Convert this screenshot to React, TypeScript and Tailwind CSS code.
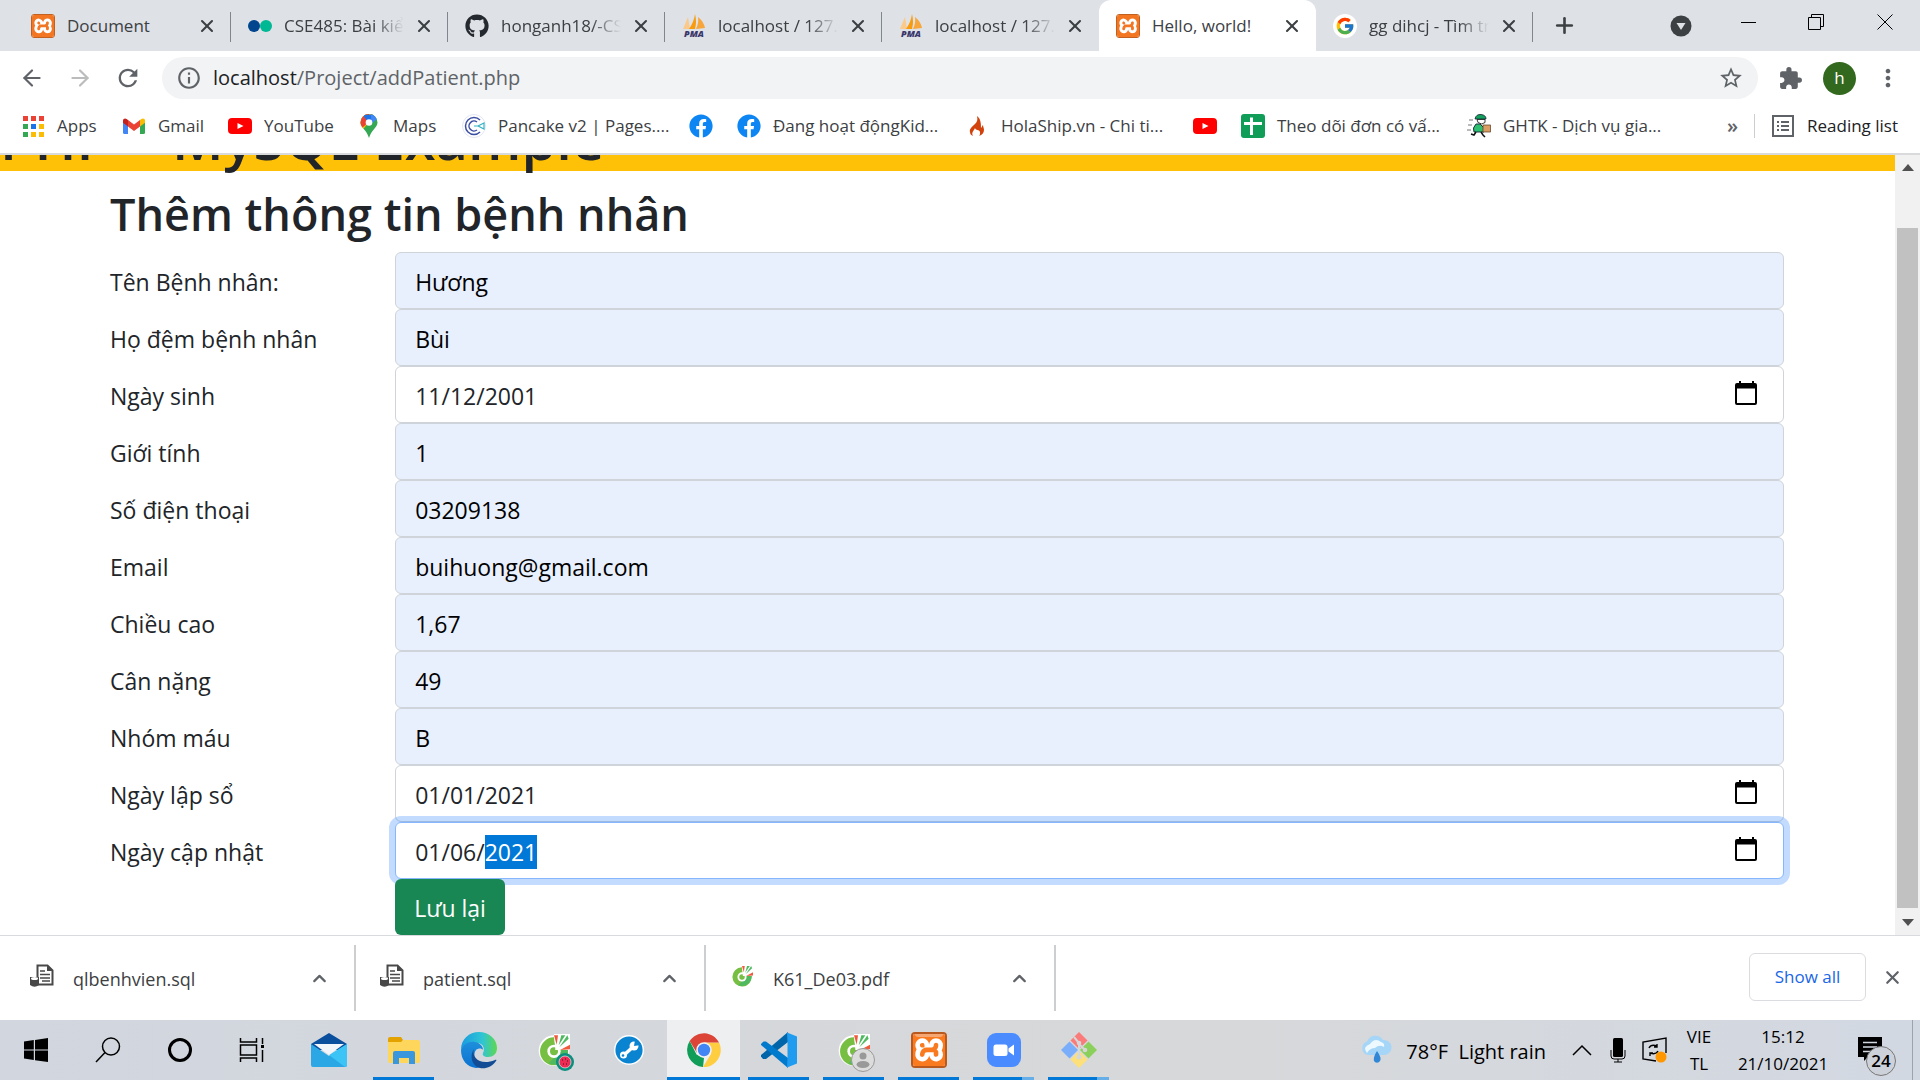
import React, { useEffect, useRef } from "react";
import { SiXampp } from "react-icons/si";
import { FcGoogle } from "react-icons/fc";
import { FaGithub, FaFacebook } from "react-icons/fa";
import { MdExtension, MdRefresh, MdStarBorder, MdInfoOutline, MdMoreVert } from "react-icons/md";
import { X, Plus, ArrowLeft, ArrowRight, ChevronUp } from "lucide-react";

function XamppSmall() {
  return (
    <span className="flex size-6 items-center justify-center overflow-hidden rounded-[3px] border border-[#c2601f] bg-white">
      <SiXampp size={24} color="#f37623" className="shrink-0" />
    </span>
  );
}

function XamppLarge() {
  return (
    <span className="relative flex size-9 items-center justify-center overflow-hidden rounded-[4px] border-2 border-[#b9591d] bg-white">
      <SiXampp size={38} color="#f97a1f" className="shrink-0" />
      <span className="absolute inset-x-[2px] top-0 h-[3px] rounded-b bg-[#f5a873]" />
    </span>
  );
}

function Dots() {
  return (
    <svg width="24" height="24" viewBox="0 0 24 24">
      <circle cx="6" cy="12" r="6" fill="#01458e" />
      <circle cx="18" cy="12" r="6" fill="#00b894" />
    </svg>
  );
}

function Pma() {
  return (
    <svg width="24" height="24" viewBox="0 0 24 24">
      <path d="M6 3 L8 15 L1 15 Z" fill="#fbc98a" />
      <path d="M13 0 Q15 8 13 15 L7 15 Q12 8 13 0Z" fill="#f89c0e" />
      <path d="M16 3 Q22 8 23 14 L14 15 Q17 9 16 3Z" fill="#f6a63a" />
      <text x="12" y="23" textAnchor="middle" fontFamily="Open Sans" fontStyle="italic" fontWeight="800" fontSize="9" fill="#39366b">PMA</text>
    </svg>
  );
}

function YouTube() {
  return (
    <svg width="24" height="24" viewBox="0 0 24 24">
      <rect x="0" y="4" width="24" height="16" rx="4" fill="#f00" />
      <path d="M9.500 9v6l6-3z" fill="#fff" />
    </svg>
  );
}

function AppsGrid() {
  const colors = ["#ea4335", "#ea4335", "#ea4335", "#34a853", "#1a73e8", "#fbbc04", "#34a853", "#fbbc04", "#fbbc04"];
  return (
    <svg width="24" height="24" viewBox="0 0 24 24">
      {colors.map((c, i) => (
        <rect key={i} x={2 + (i % 3) * 8} y={2 + Math.floor(i / 3) * 8} width="5" height="5" fill={c} />
      ))}
    </svg>
  );
}

function Gmail() {
  return (
    <svg width="24" height="24" viewBox="0 0 24 24">
      <path d="M1 6v12.500A1.500 1.500 0 0 0 2.500 20H6V10z" fill="#4285f4" />
      <path d="M23 6v12.500a1.500 1.500 0 0 1-1.500 1.500H18V10z" fill="#34a853" />
      <path d="M6 6v6.500l6 4.500 6-4.500V6l-6 4.500z" fill="#ea4335" />
      <path d="M1 6.500v2.200l5 3.800V6L4.600 4.900C3 3.700 1 4.700 1 6.500z" fill="#c5221f" />
      <path d="M23 6.500v2.200l-5 3.800V6l1.400-1.100C21 3.700 23 4.700 23 6.500z" fill="#fbbc04" />
    </svg>
  );
}

function MapsPin() {
  return (
    <svg width="24" height="24" viewBox="0 0 24 24">
      <defs>
        <clipPath id="pin">
          <path d="M12 0a8.500 8.500 0 0 0-8.500 8.500c0 5 6.500 8 8.500 15.500 2-7.500 8.500-10.500 8.500-15.500A8.500 8.500 0 0 0 12 0z" />
        </clipPath>
      </defs>
      <g clipPath="url(#pin)">
        <rect width="24" height="24" fill="#34a853" />
        <path d="M0 0h17L12 8 4 18H0z" fill="#fbbc04" />
        <path d="M0 0h12v8L5 14 0 12z" fill="#ea4335" />
        <path d="M6 1 20 0 12 10z" fill="#1a73e8" />
        <path d="M14 0h10v6l-4-1-6 5z" fill="#4285f4" />
      </g>
      <circle cx="12" cy="8.500" r="3.300" fill="#fff" />
    </svg>
  );
}

function Pancake() {
  return (
    <svg width="24" height="24" viewBox="0 0 24 24" fill="none">
      <circle cx="12" cy="12" r="11.500" stroke="#e2e6f2" />
      <path d="M18 6a8.500 8.500 0 1 0 0 12" stroke="#3d4fa3" strokeWidth="1.500" />
      <path d="M15 8a5 5 0 1 0 0 8" stroke="#3d4fa3" strokeWidth="1.500" />
      <path d="M12 12h4l6-3v6l-6-3" stroke="#35b3c4" strokeWidth="1.200" />
    </svg>
  );
}

function Facebook() {
  return <FaFacebook size={24} color="#0d86f4" />;
}

function Flame() {
  return (
    <svg width="24" height="24" viewBox="0 0 24 24">
      <path d="M12 2c1 4 0 6-2 8-3 3-6 5-5 8 0 2 1 3 3 4-2-4 1-5 2-8 1 3 4 1 5 4 0 2 0 3-1 4 3-1 5-3 5-6 0-2-1-3-1-5-1 1-1 2-2 3 0-4 0-9-4-12z" fill="#d2420d" />
    </svg>
  );
}

function Sheet() {
  return (
    <svg width="24" height="24" viewBox="0 0 24 24">
      <rect width="24" height="24" rx="3" fill="#0f9d58" />
      <path d="M9 3.500h3V8h9v3h-9v10H9V11H3V8h6z" fill="#fff" />
    </svg>
  );
}

function Runner() {
  return (
    <svg width="24" height="24" viewBox="0 0 24 24">
      <path d="M8 5q1-5 6-4.500 5 .5 5 4.500z" fill="#12a05c" stroke="#123" strokeWidth=".8" />
      <path d="M10 5.500h8v3q-3 3-7 0z" fill="#fff" stroke="#222" strokeWidth=".9" />
      <path d="M9 10q-4 4-2 8h10v-4l-4-4z" fill="#2fbf71" stroke="#123" strokeWidth=".9" />
      <rect x="16" y="11" width="7.500" height="7" fill="#d99c62" stroke="#5a3b1c" strokeWidth=".7" />
      <path d="M9 18l-2 3-3-1M14 18l2 3 2 2" fill="none" stroke="#111" strokeWidth="1.500" />
      <path d="M2 6h4M1 11h4M0 16h4" stroke="#777" strokeWidth="1" />
    </svg>
  );
}

function ReadingList() {
  return (
    <svg width="24" height="24" viewBox="0 0 24 24" fill="none" stroke="#5f6368" strokeWidth="2">
      <rect x="2" y="2" width="20" height="20" />
      <path d="M6 8h2M10 8h8M6 12h2M10 12h8M6 16h2M10 16h8" />
    </svg>
  );
}

function CocCoc({ size }: { size: number }) {
  return (
    <svg width={size} height={size} viewBox="0 0 24 24">
      <path d="M13 1A11.500 11.500 0 1 0 23.500 13L24 0z" fill="#fff" />
      <path d="M12 2.500A10.500 10.500 0 1 0 22.500 12H18L13 9z" fill="#76bf43" />
      <path d="M22.500 12A10.500 10.500 0 0 1 8 22l6-6 4-4z" fill="#4fb960" />
      <circle cx="12" cy="13" r="5" fill="#fff" />
      <circle cx="12" cy="13" r="3" fill="#76bf43" />
      <path d="M12 0h12v12H13z" fill="#fff" />
      <path d="M12 1h3l-1 7z" fill="#f05a3c" />
      <path d="M22 1l1 2.500L16 10z" fill="#4fb960" />
      <path d="M24 8v3.500L16.500 12z" fill="#f05a3c" />
      <path d="M17.500 1H20.500L15.500 8.500z" fill="#4fb960" />
    </svg>
  );
}

function SqlFile() {
  return (
    <svg width="24" height="24" viewBox="0 0 24 24">
      <path d="M7.500 1.500h10l5 5v14h-15z" fill="#fff" stroke="#484848" strokeWidth="2" />
      <path d="M17 1.500v5.500h5.500" fill="#484848" />
      <path d="M10 7h5M10 10.500h10M10 14h10M12 17h8" stroke="#484848" strokeWidth="1.500" />
      <path d="M0 13h9v8q-4.500 3.500-9 0z" fill="#484848" />
      <ellipse cx="4.500" cy="14.500" rx="3.500" ry="1.500" fill="#fff" />
    </svg>
  );
}

const tabs = [
  { icon: <XamppSmall />, title: "Document" },
  { icon: <Dots />, title: "CSE485: Bài kiểm" },
  { icon: <FaGithub size={24} color="#24292f" />, title: "honganh18/-CSE" },
  { icon: <Pma />, title: "localhost / 127.0" },
  { icon: <Pma />, title: "localhost / 127.0" },
  { icon: <XamppSmall />, title: "Hello, world!", active: true },
  {
    icon: (
      <span className="flex size-6 items-center justify-center rounded-full bg-white">
        <FcGoogle size={20} />
      </span>
    ),
    title: "gg dihcj - Tìm tr",
  },
];

function TabStrip() {
  return (
    <header className="flex h-[51px] items-stretch bg-[#dee1e6] pl-[14px]">
      {tabs.map((t, i) => (
        <div
          key={i}
          className={
            t.active
              ? "relative flex w-[217px] items-center rounded-t-xl bg-white pr-[12px] pl-[17px]"
              : "relative flex w-[217px] items-center pr-[12px] pl-[17px]"
          }
        >
          <span className="shrink-0">{t.icon}</span>
          <span
            className={
              t.active || i === 0
                ? "ml-3 flex-1 overflow-hidden text-[17px] whitespace-nowrap text-[#3c4043]"
                : "ml-3 flex-1 overflow-hidden mask-r-from-75% text-[17px] whitespace-nowrap text-[#3c4043]"
            }
          >
            {t.title}
          </span>
          <button aria-label="Close tab" className="ml-2 flex size-6 shrink-0 items-center justify-center text-[#3c4043]">
            <X size={20} strokeWidth={2.500} />
          </button>
          {!t.active && i !== 4 && <span className="absolute top-3 right-0 h-[30px] w-px bg-[#80868b]" />}
        </div>
      ))}
      <button aria-label="New tab" className="ml-[19px] flex items-center text-[#3c4043]">
        <Plus size={25} strokeWidth={2.500} />
      </button>
      <div className="ml-auto flex items-stretch">
        <button aria-label="Search tabs" className="flex w-[52px] items-center justify-center">
          <svg width="22" height="22" viewBox="0 0 22 22">
            <circle cx="11" cy="11" r="10.500" fill="#3c4043" />
            <path d="M6.500 8h9L11 15z" fill="#dee1e6" />
          </svg>
        </button>
        <button aria-label="Minimize" className="ml-[8px] flex h-[43px] w-[67px] items-center justify-center">
          <svg width="16" height="16" viewBox="0 0 16 16"><path d="M0 8.500h15" stroke="#000" /></svg>
        </button>
        <button aria-label="Restore" className="flex h-[43px] w-[68px] items-center justify-center">
          <svg width="16" height="16" viewBox="0 0 16 16" fill="none" stroke="#000">
            <path d="M.5 3.500h12v12H.5zM3.500 3.500v-3h12v12h-3" />
          </svg>
        </button>
        <button aria-label="Close" className="flex h-[43px] w-[70px] items-center justify-center">
          <svg width="16" height="16" viewBox="0 0 16 16"><path d="M.5.5l15 15M15.500.5l-15 15" stroke="#000" /></svg>
        </button>
      </div>
    </header>
  );
}

function Toolbar() {
  return (
    <div className="flex h-[53px] items-center px-[18px] pt-px text-[#5f6368]">
      <button aria-label="Back" className="flex w-7 justify-center"><ArrowLeft size={26} /></button>
      <button aria-label="Forward" className="ml-5 flex w-7 justify-center text-[#babcbe]"><ArrowRight size={26} /></button>
      <button aria-label="Reload" className="ml-5 flex w-7 justify-center"><MdRefresh size={28} /></button>
      <div className="ml-5 flex h-[42px] flex-1 items-center rounded-full bg-[#f1f3f4] px-[14px]">
        <MdInfoOutline size={26} />
        <div className="relative ml-[11px] flex-1">
          <input
            aria-label="Address"
            defaultValue="localhost/Project/addPatient.php"
            className="w-full bg-transparent text-[20px] text-transparent outline-none"
          />
          <div aria-hidden className="pointer-events-none absolute inset-0 flex items-center text-[20px] text-[#5f6368]">
            <span className="text-[#202124]">localhost</span>/Project/addPatient.php
          </div>
        </div>
        <button aria-label="Bookmark this tab"><MdStarBorder size={26} /></button>
      </div>
      <button aria-label="Extensions" className="ml-5"><MdExtension size={25} /></button>
      <button aria-label="Profile" className="ml-5 flex size-[33px] items-center justify-center rounded-full bg-[#33691e] text-[17px] text-white">h</button>
      <button aria-label="Menu" className="ml-[18px]"><MdMoreVert size={28} /></button>
    </div>
  );
}

const bookmarks = [
  { icon: <AppsGrid />, label: "Apps", width: "w-[101px]" },
  { icon: <Gmail />, label: "Gmail", width: "w-[106px]" },
  { icon: <YouTube />, label: "YouTube", width: "w-[129px]" },
  { icon: <MapsPin />, label: "Maps", width: "w-[105px]" },
  { icon: <Pancake />, label: "Pancake v2 | Pages....", width: "w-[227px]" },
  { icon: <Facebook />, label: "", width: "w-[48px]" },
  { icon: <Facebook />, label: "Đang hoạt độngKid...", width: "w-[228px]" },
  { icon: <Flame />, label: "HolaShip.vn - Chi ti...", width: "w-[228px]" },
  { icon: <YouTube />, label: "", width: "w-[48px]" },
  { icon: <Sheet />, label: "Theo dõi đơn có vấ...", width: "w-[226px]" },
  { icon: <Runner />, label: "GHTK - Dịch vụ gia...", width: "w-[220px]" },
];

function BookmarksBar() {
  return (
    <nav className="flex h-[51px] items-center border-b-2 border-[#d9dadc] pr-[22px] pb-[6px] pl-[21px] text-[17px] text-[#3c4043]">
      {bookmarks.map((b, i) => (
        <a key={i} href="#" aria-label={b.label || "Bookmark"} className={`flex shrink-0 items-center gap-3 whitespace-nowrap ${b.width}`}>
          <span className="shrink-0">{b.icon}</span>
          {b.label}
        </a>
      ))}
      <button className="ml-auto text-[20px] font-semibold text-[#5f6368]">»</button>
      <span className="ml-4 h-6 w-px bg-[#ccced1]" />
      <button className="ml-4 flex items-center gap-3 whitespace-nowrap text-[#202124]">
        <ReadingList />
        Reading list
      </button>
    </nav>
  );
}

function CalendarIcon() {
  return (
    <svg width="24" height="26" viewBox="0 0 24 26">
      <path d="M5 1h2v2h11V1h2v2h1q2 0 2 2v18q0 2-2 2H3q-2 0-2-2V5q0-2 2-2h2zM3 8.500V23h18V8.500z" fill="#000" />
    </svg>
  );
}

type Field = { id: string; label: string; value: string; kind: "filled" | "date" | "focused" };

const fields: Field[] = [
  { id: "ten", label: "Tên Bệnh nhân:", value: "Hương", kind: "filled" },
  { id: "hodem", label: "Họ đệm bệnh nhân", value: "Bùi", kind: "filled" },
  { id: "ngaysinh", label: "Ngày sinh", value: "11/12/2001", kind: "date" },
  { id: "gioitinh", label: "Giới tính", value: "1", kind: "filled" },
  { id: "sdt", label: "Số điện thoại", value: "03209138", kind: "filled" },
  { id: "email", label: "Email", value: "buihuong@gmail.com", kind: "filled" },
  { id: "chieucao", label: "Chiều cao", value: "1,67", kind: "filled" },
  { id: "cannang", label: "Cân nặng", value: "49", kind: "filled" },
  { id: "nhommau", label: "Nhóm máu", value: "B", kind: "filled" },
  { id: "ngaylap", label: "Ngày lập sổ", value: "01/01/2021", kind: "date" },
  { id: "capnhat", label: "Ngày cập nhật", value: "01/06/2021", kind: "focused" },
];

const boxClass = {
  filled: "border-[#ced4da] bg-[#e8f0fe] text-black",
  date: "border-[#ced4da] bg-white text-[#212529]",
  focused: "relative border-[#86b7fe] bg-white text-[#212529] ring-6 ring-[#0d6efd]/25",
};

function FormRow({ field }: { field: Field }) {
  const ref = useRef<HTMLInputElement>(null);
  useEffect(() => {
    if (field.kind === "focused" && ref.current) {
      ref.current.focus({ preventScroll: true });
      ref.current.setSelectionRange(6, 10);
    }
  }, [field.kind]);
  return (
    <div className="grid grid-cols-6">
      <label htmlFor={field.id} className="flex h-[57px] items-center px-[18px] pt-[3px] text-[23px] whitespace-nowrap">
        {field.label}
      </label>
      <div className="col-span-5 pr-[19px] pl-[18px]">
        <div className={`flex h-[57px] items-center rounded-md border pr-[25px] pl-[19px] ${boxClass[field.kind]}`}>
          <input
            id={field.id}
            ref={ref}
            defaultValue={field.value}
            className="mt-[3px] min-w-0 flex-1 bg-transparent text-[23px] outline-none selection:bg-[#0078d7] selection:text-white"
          />
          {field.kind !== "filled" && (
            <button type="button" aria-label="Open calendar" className="pb-1">
              <CalendarIcon />
            </button>
          )}
        </div>
      </div>
    </div>
  );
}

function PageContent() {
  return (
    <div className="flex h-[780px]">
      <main className="min-w-0 flex-1 overflow-hidden text-[#212529]">
        <div className="flex h-4 items-end bg-[#ffc107]">
          <h1 className="h-[53px] text-[56px] leading-[40px] font-semibold whitespace-nowrap">PHP + MySQL Example</h1>
        </div>
        <div className="mx-auto w-[1711px] max-w-full">
          <h2 className="h-[81px] px-[18px] pt-[11px] text-[45px] leading-[64px] font-semibold">Thêm thông tin bệnh nhân</h2>
          <form>
            {fields.map((f) => (
              <FormRow key={f.id} field={f} />
            ))}
            <div className="grid grid-cols-6">
              <div className="col-span-5 col-start-2 px-[18px]">
                <button type="button" className="relative h-[56px] rounded-md bg-[#198754] px-[19px] pt-[3px] text-[23px] text-white">Lưu lại</button>
              </div>
            </div>
          </form>
        </div>
      </main>
      <div className="flex w-[25px] flex-col items-center bg-[#f1f1f1]">
        <svg className="mt-[9px]" width="12" height="7" viewBox="0 0 12 7"><path d="M6 0l6 7H0z" fill="#505050" /></svg>
        <div className="mt-[57px] w-[21px] flex-1 bg-[#c1c1c1]" />
        <svg className="mt-[11px] mb-[9px]" width="12" height="7" viewBox="0 0 12 7"><path d="M0 0h12L6 7z" fill="#505050" /></svg>
      </div>
    </div>
  );
}

const downloads = [
  { icon: <SqlFile />, name: "qlbenhvien.sql" },
  { icon: <SqlFile />, name: "patient.sql" },
  { icon: <CocCoc size={22} />, name: "K61_De03.pdf" },
];

function DownloadShelf() {
  return (
    <section className="flex h-[85px] items-center border-t border-[#d8dadd] pl-[6px]">
      {downloads.map((d) => (
        <div key={d.name} className="flex h-[66px] w-[350px] items-center border-r-2 border-[#cdced0] pr-[24px] pl-[24px]">
          <span className="flex w-6 justify-center pb-1">{d.icon}</span>
          <span className="ml-[19px] flex-1 pt-[2px] text-[18px] text-[#3c4043]">{d.name}</span>
          <button aria-label="Download options" className="text-[#5f6368]"><ChevronUp size={21} strokeWidth={2.500} /></button>
        </div>
      ))}
      <button className="mb-[2px] ml-auto h-12 w-[117px] rounded-md border border-[#dadce0] text-[17px] font-medium text-[#1a67e8]">Show all</button>
      <button aria-label="Close downloads" className="mr-[17px] mb-[2px] ml-[16px] text-[#5f6368]"><X size={21} strokeWidth={2.500} /></button>
    </section>
  );
}

function WindowsLogo() {
  return (
    <svg width="24" height="24" viewBox="0 0 24 24">
      <path d="M0 3.500 9.800 2v9.500H0zM11 1.900 24 0v11.500H11zM0 12.600h9.800V22L0 20.600zM11 12.600h13V24l-13-1.800z" fill="#000" />
    </svg>
  );
}

function SearchIcon() {
  return (
    <svg width="26" height="26" viewBox="0 0 26 26" fill="none" stroke="#000" strokeWidth="1.500">
      <circle cx="16" cy="9.500" r="8.500" /><path d="M10 15.500 1 25" />
    </svg>
  );
}

function TaskView() {
  return (
    <svg width="26" height="26" viewBox="0 0 26 26" fill="none" stroke="#000" strokeWidth="1.500">
      <path d="M1.500 1v4h16V1M1.500 8h16v10h-16zM1.500 25v-4h16v4M23.500 1v6M23.500 13v12" />
      <rect x="22" y="8" width="3" height="3" fill="#000" stroke="none" />
    </svg>
  );
}

function Mail() {
  return (
    <svg width="36" height="36" viewBox="0 0 36 36">
      <path d="M0 12 18 1l18 11v6H0z" fill="#0a4f9e" />
      <path d="M0 12l18 12L36 12v21q0 2-2 2H2q-2 0-2-2z" fill="#2ba7e6" />
      <path d="M18 23 36 12v21q0 2-2 2z" fill="#3bc4f5" />
      <path d="M3 12h30L18 23z" fill="#f2f5f9" />
    </svg>
  );
}

function Explorer() {
  return (
    <svg width="34" height="34" viewBox="0 0 34 34">
      <path d="M1 6q0-2 2-2h11l2 3-2 4H1z" fill="#e3a200" />
      <path d="M1 9h13l2-2h15q2 0 2 2v19q0 2-2 2H3q-2 0-2-2z" fill="#fed65b" />
      <path d="M6 31V20q0-2 2-2h18q2 0 2 2v11h-6v-6H12v6z" fill="#3a96dd" />
    </svg>
  );
}

function Edge() {
  return (
    <svg width="38" height="38" viewBox="0 0 38 38">
      <defs>
        <linearGradient id="edgeTop" x1="0" x2="1"><stop offset="0" stopColor="#1a9be0" /><stop offset=".6" stopColor="#2fc5d4" /><stop offset="1" stopColor="#5ed84f" /></linearGradient>
        <linearGradient id="edgeSide" x1="0" x2="0" y1="0" y2="1"><stop offset="0" stopColor="#1e8fdc" /><stop offset="1" stopColor="#0b72d0" /></linearGradient>
      </defs>
      <path d="M1 19C1 8 9 1 19 1s18 7 18 16c0 6-4 9-9 9-4 0-6-2-5-4 2-3 1-10-6-10C9 12 3 14 1 19z" fill="url(#edgeTop)" />
      <path d="M1 19c2-6 8-9 14-8 5 1 8 4 8 8-1-2-5-2-7 0-4 5 0 13 8 14-2 3-6 4-8 4C7 36 1 29 1 19z" fill="url(#edgeSide)" />
      <path d="M14 18c-3 9 7 17 21 11 1-.5 2 0 1 1-4 6-10 8-16 7-8-2-11-12-6-19z" fill="#124c94" />
    </svg>
  );
}

function CocCocMelon() {
  return (
    <span className="relative">
      <CocCoc size={32} />
      <svg className="absolute right-[-4px] bottom-[-5px]" width="18" height="18" viewBox="0 0 18 18">
        <circle cx="9" cy="9" r="9" fill="#0a8f7e" /><circle cx="9" cy="9" r="6" fill="#ef2b55" stroke="#fff" strokeWidth=".6" />
        <path d="M6 7h1M9 6h1M11 8h1M7 11h1M10 11h1" stroke="#222" strokeWidth="1.200" />
      </svg>
    </span>
  );
}

function CocCocUser() {
  return (
    <span className="relative">
      <CocCoc size={32} />
      <svg className="absolute right-[-5px] bottom-[-6px]" width="24" height="24" viewBox="0 0 24 24">
        <circle cx="12" cy="12" r="11.500" fill="#dcdcdc" stroke="#999" />
        <circle cx="12" cy="8" r="3.500" fill="#999" /><ellipse cx="12" cy="16.500" rx="6.500" ry="3.500" fill="#999" />
      </svg>
    </span>
  );
}

function Wrench() {
  return (
    <svg width="30" height="30" viewBox="0 0 30 30">
      <circle cx="15" cy="15" r="14.300" fill="#0a84d0" stroke="#fff" strokeWidth="1.400" />
      <path d="M10 20 L20 11" stroke="#fff" strokeWidth="3.500" />
      <circle cx="9.500" cy="20" r="3.500" fill="#fff" /><circle cx="9" cy="20.500" r="1.300" fill="#0a84d0" />
      <circle cx="20" cy="11" r="4.500" fill="#fff" /><path d="M20 11l1-6 6 5z" fill="#0a84d0" />
    </svg>
  );
}

function Chrome() {
  return (
    <svg width="34" height="34" viewBox="0 0 34 34">
      <path d="M2.700 8 9.500 21.500 17 25 16 34A17 17 0 0 1 2.700 8z" fill="#0f9d58" />
      <path d="M17 9.500h15A17 17 0 0 1 16 34l8-13z" fill="#ffcd40" />
      <path d="M10 20 2.700 8A17 17 0 0 1 32 9.500H17z" fill="#db4437" />
      <circle cx="17" cy="17" r="7.800" fill="#f1f1f1" /><circle cx="17" cy="17" r="6.200" fill="#4285f4" />
    </svg>
  );
}

function VsCode() {
  return (
    <svg width="36" height="36" viewBox="0 0 36 36">
      <path d="M27 0v10L5 27 2 27 0 24.500 0 23z" fill="#0065a9" />
      <path d="M0 12 2.500 9.500 5 9.500 27 26v10L0 13z" fill="#007acc" />
      <path d="M26 .5 36 4.500V31.500L26 35.500 26.500 26V10z" fill="#1f9cf0" />
    </svg>
  );
}

function ZoomApp() {
  return (
    <svg width="34" height="34" viewBox="0 0 34 34">
      <rect width="34" height="34" rx="9" fill="#4a8cff" />
      <rect x="6.500" y="11.500" width="14" height="11.500" rx="2.500" fill="#fff" /><path d="M21.500 15.500l5.500-4v11l-5.500-4z" fill="#fff" />
    </svg>
  );
}

function GitApp() {
  return (
    <svg width="36" height="36" viewBox="0 0 36 36">
      <path d="M18 0l8.500 8.500L18 17 9.500 8.500z" fill="#fb7b7b" />
      <path d="M27.500 9.500 36 18l-8.500 8.500L19 18z" fill="#8ad05a" />
      <path d="M8.500 9.500 17 18l-8.500 8.500L0 18z" fill="#7aaefb" />
      <path d="M18 19l8.500 8.500L18 36l-8.500-8.500z" fill="#fde07a" />
      <path d="M13 5l5 6v14M18 12l6 6" fill="none" stroke="#d6d7d8" strokeWidth="2" />
      <circle cx="18" cy="11" r="2.300" fill="#d6d7d8" /><circle cx="18" cy="25" r="2.500" fill="#d6d7d8" /><circle cx="24" cy="18" r="2.300" fill="#d6d7d8" />
    </svg>
  );
}

const systemButtons = [
  { name: "Start", icon: <WindowsLogo /> },
  { name: "Search", icon: <SearchIcon /> },
  { name: "Cortana", icon: <span className="block size-6 rounded-full border-[3px] border-black" /> },
  { name: "Task View", icon: <TaskView /> },
];

const apps = [
  { name: "Mail", icon: <Mail />, state: "idle" },
  { name: "File Explorer", icon: <Explorer />, state: "open" },
  { name: "Edge", icon: <Edge />, state: "idle" },
  { name: "Browser", icon: <CocCocMelon />, state: "idle" },
  { name: "Tools", icon: <Wrench />, state: "idle" },
  { name: "Chrome", icon: <Chrome />, state: "active" },
  { name: "Code", icon: <VsCode />, state: "open" },
  { name: "Browser profile", icon: <CocCocUser />, state: "open" },
  { name: "XAMPP", icon: <XamppLarge />, state: "open" },
  { name: "Zoom", icon: <ZoomApp />, state: "multi" },
  { name: "Git", icon: <GitApp />, state: "multi" },
];

function Taskbar() {
  return (
    <footer className="flex h-[60px] items-stretch bg-linear-to-r from-[#d1d6df] via-[#d7d8d9] via-60% to-[#d2d8e2] text-black">
      {systemButtons.map((b) => (
        <button key={b.name} aria-label={b.name} className="flex w-[72px] items-center justify-center">{b.icon}</button>
      ))}
      <div className="ml-[3px] flex">
        {apps.map((a) => (
          <button
            key={a.name}
            aria-label={a.name}
            className={a.state === "active" ? "relative mx-px flex w-[73px] items-center justify-center bg-[#eeeff1]" : "relative flex w-[75px] items-center justify-center"}
          >
            {a.icon}
            {a.state === "active" && <span className="absolute inset-x-0 bottom-0 h-[3px] bg-[#0078d7]" />}
            {(a.state === "open" || a.state === "multi") && <span className="absolute inset-x-[7px] bottom-0 h-[3px] bg-[#0078d7]" />}
            {a.state === "multi" && <span className="absolute right-[7px] bottom-0 h-[3px] w-3 bg-[#66aee7]" />}
          </button>
        ))}
      </div>
      <div className="ml-auto flex items-center">
        <svg width="32" height="30" viewBox="0 0 32 30">
          <path d="M8 20a7 7 0 0 1-1-13.500A9 9 0 0 1 23 5a7.500 7.500 0 0 1 2 15z" fill="#a5d6f8" />
          <path d="M7 18q-5-6 3-9 5-7 11-2 4 1 3 5-5-3-9 1-5 0-8 5z" fill="#eef8ff" />
          <path d="M17 16q5 7 3 10a3.500 3.500 0 0 1-6 0q-1-4 3-10z" fill="#2f87d6" />
        </svg>
        <span className="ml-[14px] pt-1 text-[20px] whitespace-pre">78°F  Light rain</span>
        <svg className="ml-[26px]" width="20" height="12" viewBox="0 0 20 12" fill="none" stroke="#000" strokeWidth="1.500"><path d="M1 11l9-9 9 9" /></svg>
        <svg className="ml-[18px]" width="16" height="26" viewBox="0 0 16 26">
          <rect x="3" y="1" width="10" height="19" rx="1.500" fill="#000" />
          <path d="M1 13v6q0 3 3 3h8q3 0 3-3v-6M8 22v3M4 25h8" fill="none" stroke="#000" />
        </svg>
        <svg className="ml-[16px]" width="26" height="26" viewBox="0 0 26 26" fill="none" stroke="#000" strokeWidth="1.400">
          <path d="M14 24 1 22V5l23-4v15" />
          <path d="M7 11q2-4 8-2m0-2v3h-3M16 14q-2 4-8 2m0 3v-3h3" />
          <circle cx="19" cy="20" r="5.500" fill="#ff9800" stroke="none" />
        </svg>
        <div className="ml-[15px] w-[32px] text-center text-[17px] leading-[27px]">
          <div>VIE</div>
          <div>TL</div>
        </div>
        <div className="ml-[18px] w-[100px] text-center text-[17px] leading-[27px]">
          <div>15:12</div>
          <div>21/10/2021</div>
        </div>
        <button aria-label="Notifications" className="relative ml-[25px] size-[24px]">
          <svg className="mt-[-2px]" width="24" height="24" viewBox="0 0 24 24">
            <path d="M0 0h24v20H10l-4 4v-4H0z" fill="#000" />
            <path d="M5 5.500h14M5 10h14M5 14.500h9" stroke="#d2d8e2" strokeWidth="1.500" />
          </svg>
          <span className="absolute top-[8px] left-[8px] flex size-[30px] items-center justify-center rounded-full border border-[#777] bg-[#cdd2da] text-[17px] font-semibold">24</span>
        </button>
        <span className="ml-[30px] h-full w-px bg-[#9ea3aa]" />
        <span className="w-[7px]" />
      </div>
    </footer>
  );
}

export default function App() {
  return (
    <div className="flex w-full flex-col overflow-hidden bg-white font-['Open_Sans','Noto_Sans',sans-serif]">
      <TabStrip />
      <Toolbar />
      <BookmarksBar />
      <PageContent />
      <DownloadShelf />
      <Taskbar />
    </div>
  );
}
